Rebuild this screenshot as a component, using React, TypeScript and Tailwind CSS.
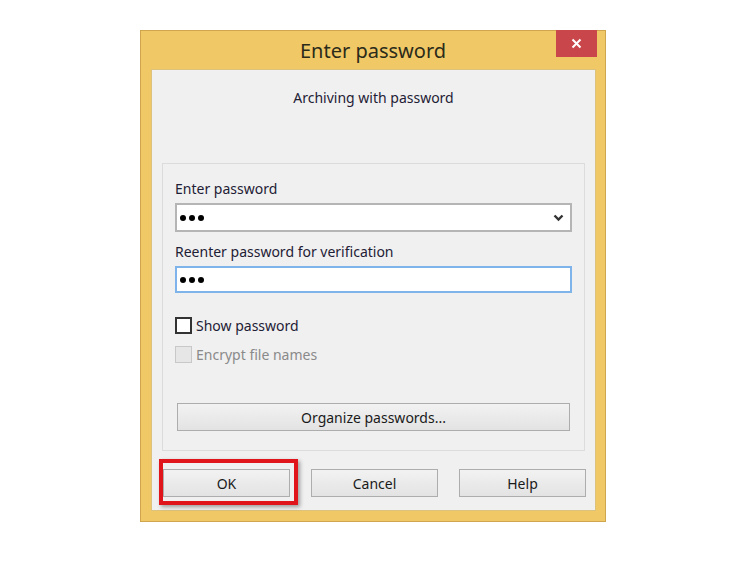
import React from "react";

const Dots = () => (
  <div className="flex items-center gap-[3px]">
    <span className="h-[6px] w-[6px] rounded-full bg-black" />
    <span className="h-[6px] w-[6px] rounded-full bg-black" />
    <span className="h-[6px] w-[6px] rounded-full bg-black" />
  </div>
);

const Btn = ({ label, className = "" }: { label: string; className?: string }) => (
  <button
    className={`flex h-[28px] w-[127px] items-center justify-center border border-[#adadad] bg-gradient-to-b from-[#f2f2f2] to-[#e3e3e3] text-[14px] text-[#1a1a1a] ${className}`}
  >
    {label}
  </button>
);

export default function App() {
  return (
    <div
      className="min-h-[571px] w-[755px] bg-white pl-[140px] pt-[30px]"
      style={{ fontFamily: '"Noto Sans", "Open Sans", sans-serif' }}
    >
      {/* window */}
      <div className="flex h-[492px] w-[466px] flex-col border border-[#cfa54e] bg-[#f1c866]">
        {/* title bar */}
        <div className="relative flex h-[38px] items-center justify-center">
          <span className="pt-[2px] text-[20px] text-[#2b2b1a]">Enter password</span>
          <div className="absolute right-[8px] top-[-1px] flex h-[27px] w-[41px] items-center justify-center bg-[#c9474a]">
            <svg width="11" height="11" viewBox="0 0 11 11">
              <path d="M1.5 1.5 L9.5 9.5 M9.5 1.5 L1.5 9.5" stroke="#fff" strokeWidth="2" />
            </svg>
          </div>
        </div>

        {/* client area */}
        <div className="ml-[10px] mr-[9px] flex h-[442px] flex-col border border-[#dcc27c] bg-[#f0f0f0]">
          <div className="h-[74px] pt-[17px] text-center text-[14px] text-[#1e2035]">Archiving with password</div>

          {/* group box */}
          <div className="mx-[10px] mt-[19px] flex h-[288px] flex-col border border-[#dcdcdc] px-[12px]">
            <div className="mt-[15px] text-[14px] leading-[19px] text-[#1e2035]">Enter password</div>
            <div className="mt-[5px] flex h-[29px] items-center justify-between border-2 border-[#b5b5b5] bg-white pl-[3px] pr-[6px]">
              <Dots />
              <svg width="11" height="8" viewBox="0 0 11 8">
                <path d="M1.5 1.5 L5.5 5.5 L9.5 1.5" fill="none" stroke="#333" strokeWidth="2.4" />
              </svg>
            </div>
            <div className="mt-[10px] text-[14px] leading-[19px] text-[#1e2035]">Reenter password for verification</div>
            <div className="mt-[5px] flex h-[27px] items-center border-2 border-[#7eb4ea] bg-white pl-[3px]">
              <Dots />
            </div>

            <div className="mt-[22px] flex items-center gap-[4px]">
              <span className="h-[17px] w-[17px] border-2 border-[#333] bg-white" />
              <span className="text-[14px] text-[#1e2035]">Show password</span>
            </div>
            <div className="mt-[8px] flex items-center gap-[4px]">
              <span className="h-[17px] w-[17px] border border-[#c8c8c8] bg-[#e6e6e6]" />
              <span className="text-[14px] text-[#8a8a8a]">Encrypt file names</span>
            </div>

            <button className="mx-[2px] mt-[38px] flex h-[28px] items-center justify-center border border-[#adadad] bg-gradient-to-b from-[#f2f2f2] to-[#e3e3e3] text-[14px] text-[#1a1a1a]">
              Organize passwords...
            </button>
          </div>

          {/* bottom buttons */}
          <div className="ml-[11px] mt-[18px] flex gap-[21px]">
            <div className="relative">
              <Btn label="OK" className="border-[#569de5]" />
              <div className="absolute left-[-4px] top-[-10px] h-[46px] w-[139px] border-4 border-[#e0141b] shadow-[2px_2px_4px_rgba(0,0,0,0.35)]" />
            </div>
            <Btn label="Cancel" className="w-[126px]" />
            <Btn label="Help" className="w-[126px]" />
          </div>
        </div>
      </div>
    </div>
  );
}
